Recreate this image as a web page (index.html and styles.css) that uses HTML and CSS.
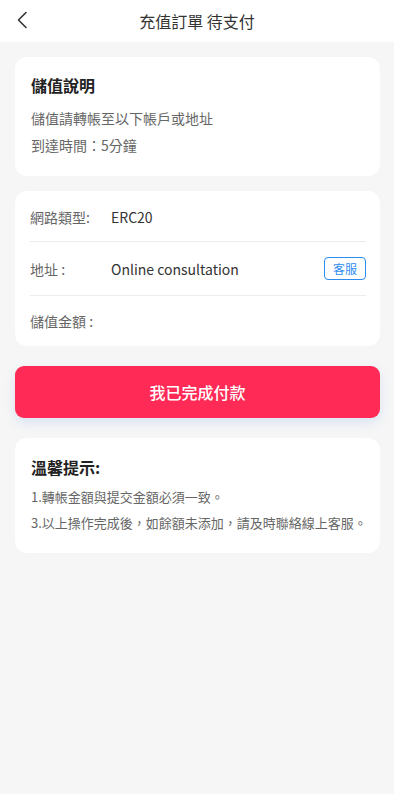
FILE: index.html
```html
<!DOCTYPE html>
<html lang="zh-Hant">
<head>
<meta charset="utf-8">
<meta name="viewport" content="width=device-width, initial-scale=1">
<title>充值訂單 待支付</title>
<link rel="stylesheet" href="styles.css">
</head>
<body>
<header class="topbar">
  <span class="back" aria-label="返回">
    <svg width="12" height="18" viewBox="0 0 12 18"><path d="M10 1.5 L2.5 9 L10 16.5" fill="none" stroke="#333" stroke-width="1.6" stroke-linecap="round" stroke-linejoin="round"/></svg>
  </span>
  <h1 class="title">充值訂單 待支付</h1>
</header>
<main class="content">
  <section class="card info">
    <h2 class="card-title">儲值說明</h2>
    <p class="line">儲值請轉帳至以下帳戶或地址</p>
    <p class="line">到達時間：5分鐘</p>
  </section>
  <section class="card details">
    <div class="row row-first">
      <span class="label">網路類型:</span>
      <span class="value">ERC20</span>
    </div>
    <div class="row row-tall">
      <span class="label">地址 :</span>
      <span class="value">Online consultation</span>
      <span class="service">客服</span>
    </div>
    <div class="row">
      <span class="label">儲值金額 :</span>
      <span class="value"></span>
    </div>
  </section>
  <button class="pay">我已完成付款</button>
  <section class="card tips">
    <h2 class="card-title">溫馨提示:</h2>
    <p class="tip">1.轉帳金額與提交金額必須一致。</p>
    <p class="tip">3.以上操作完成後，如餘額未添加，請及時聯絡線上客服。</p>
  </section>
</main>
</body>
</html>
```
FILE: styles.css
```css
* { box-sizing: border-box; }
html, body { margin: 0; padding: 0; }
body {
  background: #f6f6f6;
  font-family: "Noto Sans CJK SC", "Noto Sans", sans-serif;
  color: #333;
  min-height: 794px;
}
.topbar {
  height: 42px;
  background: #fff;
  display: flex;
  align-items: center;
  justify-content: center;
  position: relative;
}
.back {
  position: absolute;
  left: 16px;
  top: 11px;
  width: 12px;
  height: 18px;
  display: flex;
}
.title {
  margin: 0;
  font-size: 16px;
  font-weight: 400;
  color: #333;
  line-height: 22px;
}
.content {
  padding: 15px 14px 0 15px;
  display: flex;
  flex-direction: column;
}
.card {
  background: #fff;
  border-radius: 12px;
}
.info {
  padding: 16px 15px 17px 16px;
}
.card-title {
  margin: 0 0 8px;
  font-size: 16px;
  font-weight: 700;
  line-height: 24px;
  color: #222;
}
.line {
  margin: 0;
  font-size: 14px;
  line-height: 27px;
  color: #666;
}
.details {
  margin-top: 15px;
  padding: 0 14px 0 15px;
}
.row {
  display: flex;
  align-items: center;
  height: 50px;
  border-bottom: 1px solid #ececec;
  font-size: 14px;
}
.row:last-child { border-bottom: none; }
.row-first { height: 51px; padding-top: 1px; }
.row-tall { height: 54px; }
.label {
  width: 81px;
  color: #666;
}
.value {
  flex: 1;
  color: #333;
}
.service {
  border: 1px solid #2d8cf0;
  color: #2d8cf0;
  border-radius: 4px;
  font-size: 12px;
  line-height: 21px;
  padding: 0 8px;
}
.pay {
  margin-top: 20px;
  height: 52px;
  border: none;
  border-radius: 9px;
  background: #ff2a55;
  color: #fff;
  font-family: inherit;
  font-size: 16px;
  font-weight: 500;
  box-shadow: 0 5px 12px rgba(60, 130, 230, 0.14);
}
.tips {
  margin-top: 20px;
  padding: 17px 10px 17px 16px;
}
.tips .card-title { margin-bottom: 5px; }
.tip {
  margin: 0;
  font-size: 13px;
  line-height: 26px;
  color: #666;
  white-space: nowrap;
}
```
